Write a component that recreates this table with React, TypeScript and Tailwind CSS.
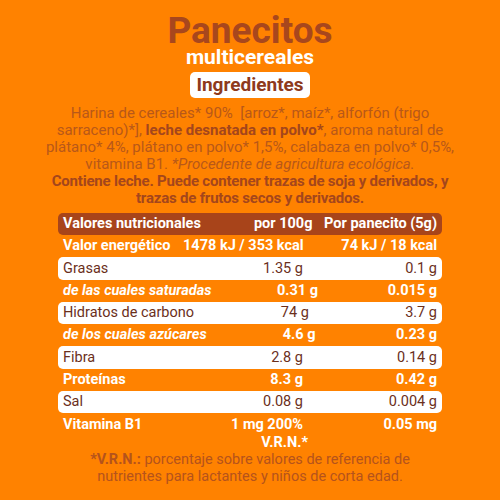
import React from 'react'

interface Row {
  label: string
  per100: string
  perUnit: string
  variant: 'white' | 'bold' | 'italic'
}

const rows: Row[] = [
  { label: 'Valor energético', per100: '1478 kJ / 353 kcal', perUnit: '74 kJ / 18 kcal', variant: 'bold' },
  { label: 'Grasas', per100: '1.35 g', perUnit: '0.1 g', variant: 'white' },
  { label: 'de las cuales saturadas', per100: '0.31 g', perUnit: '0.015 g', variant: 'italic' },
  { label: 'Hidratos de carbono', per100: '74 g', perUnit: '3.7 g', variant: 'white' },
  { label: 'de los cuales azúcares', per100: '4.6 g', perUnit: '0.23 g', variant: 'italic' },
  { label: 'Fibra', per100: '2.8 g', perUnit: '0.14 g', variant: 'white' },
  { label: 'Proteínas', per100: '8.3 g', perUnit: '0.42 g', variant: 'bold' },
  { label: 'Sal', per100: '0.08 g', perUnit: '0.004 g', variant: 'white' },
]

// numbers in the italic rows stay upright, only the label slants
const rowClass = {
  white: 'bg-white rounded-[5px] text-[#6b2f1c] font-normal',
  bold: 'text-white font-bold',
  italic: 'text-white font-bold',
}

const App = () => {
  return (
    <div className="flex h-[500px] w-[500px] flex-col items-center bg-[#ff8200] font-['Roboto',sans-serif]">
      <h1 className="mt-[14px] text-[37px] font-bold leading-[34px] text-[#a8471d]">
        Panecitos
      </h1>
      <h2 className="text-[21px] font-bold leading-[18px] text-white">
        multicereales
      </h2>
      <div className="mt-[6px] rounded-[5px] bg-white px-[6px] text-[19px] font-bold leading-[26px] text-[#8e3a1c]">
        Ingredientes
      </div>

      <p className="mt-[7px] text-center text-[15px] leading-[17px] text-[#b85819]">
        Harina de cereales* 90%&nbsp; [arroz*, maíz*, alforfón (trigo
        <br />
        sarraceno)*], <b className="text-[#a4461c]">leche desnatada en polvo*</b>, aroma natural de
        <br />
        plátano* 4%, plátano en polvo* 1,5%, calabaza en polvo* 0,5%,
        <br />
        vitamina B1. <i>*Procedente de agricultura ecológica.</i>
        <br />
        <b className="tracking-[-0.2px] text-[#a4461c]">
          Contiene leche. Puede contener trazas de soja y derivados, y
          <br />
          trazas de frutos secos y derivados.
        </b>
      </p>

      <div className="mt-[6px] w-[384px] text-[14.5px]">
        <div className="flex h-[22px] items-center whitespace-nowrap rounded-[5px] bg-[#a8441a] px-[5px] font-bold text-white">
          <span className="flex-1">Valores nutricionales</span>
          <span className="w-[120px] text-right">por 100g</span>
          <span className="w-[134px] text-right">Por panecito (5g)</span>
        </div>
        {rows.map((row) => (
          <div
            key={row.label}
            className={`flex h-[22.3px] items-center whitespace-nowrap px-[5px] ${rowClass[row.variant]}`}
          >
            <span className={`flex-1 ${row.variant === 'italic' ? 'italic' : ''}`}>{row.label}</span>
            <span className="w-[120px] text-right">{row.per100}</span>
            <span className="w-[134px] text-right">{row.perUnit}</span>
          </div>
        ))}
        <div className="flex items-start whitespace-nowrap px-[5px] pt-[3px] font-bold leading-[18px] text-white">
          <span className="flex-1">Vitamina B1</span>
          <span className="w-[120px] text-right">
            1 mg 200%
            <br />
            <span className="-mr-[5px]">V.R.N.*</span>
          </span>
          <span className="w-[134px] text-right">0.05 mg</span>
        </div>
      </div>

      <p className="-mt-[1px] text-center text-[14.5px] leading-[17px] text-[#b5531c]">
        <b>*V.R.N.:</b> porcentaje sobre valores de referencia de
        <br />
        nutrientes para lactantes y niños de corta edad.
      </p>
    </div>
  )
}

export default App
